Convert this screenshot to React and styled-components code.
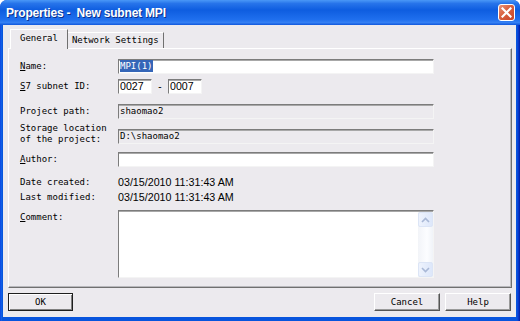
import React from 'react';
import styled, { createGlobalStyle } from 'styled-components';

const GlobalStyle = createGlobalStyle`
  html, body {
    margin: 0;
    padding: 0;
    background: #fff;
  }
  body {
    width: 520px;
    height: 321px;
    overflow: hidden;
  }
`;

const MONO = `"DejaVu Sans Mono", "Liberation Mono", monospace`;
const SANS = `"Liberation Sans", Arial, sans-serif`;
const FACE = '#ECEAEE';

const Properties = () => {
  return (
    <Window>
      <GlobalStyle />
      <TitleBar>
        <Title>Properties -  New subnet MPI</Title>
        <CloseButton aria-label="Close">
          <svg width="11" height="11" viewBox="0 0 11 11">
            <path d="M1.5 1.5 L9.5 9.5 M9.5 1.5 L1.5 9.5" stroke="#fff" strokeWidth="2.2" strokeLinecap="square" />
          </svg>
        </CloseButton>
      </TitleBar>
      <Frame>
        <Body>
          <TabStrip>
            <Tab $active>General</Tab>
            <Tab>Network Settings</Tab>
          </TabStrip>
          <Panel>
            <Row>
              <Label><u>N</u>ame:</Label>
              <Field><Selected>MPI(1)</Selected></Field>
            </Row>
            <Row $mt={5}>
              <Label><u>S</u>7 subnet ID:</Label>
              <IdGroup>
                <Field $w={34} $sans>0027</Field>
                <Dash>-</Dash>
                <Field $w={34} $sans>0007</Field>
              </IdGroup>
            </Row>
            <Row $mt={10}>
              <Label>Project path:</Label>
              <Field $readOnly>shaomao2</Field>
            </Row>
            <Row $mt={9}>
              <Label $twoLine>Storage location<br />of the project:</Label>
              <Field $readOnly>D:\shaomao2</Field>
            </Row>
            <Row $mt={7}>
              <Label><u>A</u>uthor:</Label>
              <Field />
            </Row>
            <Row $mt={8}>
              <Label>Date created:</Label>
              <Value>03/15/2010 11:31:43 AM</Value>
            </Row>
            <Row>
              <Label>Last modified:</Label>
              <Value>03/15/2010 11:31:43 AM</Value>
            </Row>
            <Row $mt={5} $top>
              <Label $top><u>C</u>omment:</Label>
              <CommentBox>
                <CommentText />
                <ScrollBar>
                  <ArrowButton>
                    <svg width="9" height="6" viewBox="0 0 9 6">
                      <path d="M1 5 L4.5 1.5 L8 5" fill="none" stroke="#A9B8D6" strokeWidth="1.6" />
                    </svg>
                  </ArrowButton>
                  <Track />
                  <ArrowButton>
                    <svg width="9" height="6" viewBox="0 0 9 6">
                      <path d="M1 1 L4.5 4.5 L8 1" fill="none" stroke="#A9B8D6" strokeWidth="1.6" />
                    </svg>
                  </ArrowButton>
                </ScrollBar>
              </CommentBox>
            </Row>
          </Panel>
          <ButtonBar>
            <Button $default>OK</Button>
            <Spacer />
            <Button>Cancel</Button>
            <Button>Help</Button>
          </ButtonBar>
        </Body>
      </Frame>
    </Window>
  );
};

const Window = styled.div`
  width: 520px;
  height: 321px;
  display: flex;
  flex-direction: column;
  border-radius: 7px 7px 0 0;
  overflow: hidden;
  background: #0A46D8;
`;

const TitleBar = styled.div`
  height: 25px;
  flex: none;
  display: flex;
  align-items: center;
  padding: 0 5px 0 6px;
  box-sizing: border-box;
  background: linear-gradient(180deg, #4A98F7 0%, #2774EA 14%, #0E5DE0 40%, #1F6FEE 78%, #3580F3 90%, #1057DC 100%);
`;

const Title = styled.div`
  flex: 1;
  color: #fff;
  font-family: ${SANS};
  font-weight: bold;
  font-size: 12px;
  letter-spacing: -0.2px;
  white-space: pre;
  padding-top: 1px;
  text-shadow: 1px 1px #0A2F8C;
`;

const CloseButton = styled.div`
  width: 17px;
  height: 17px;
  box-sizing: border-box;
  border: 1px solid #fff;
  border-radius: 3px;
  display: flex;
  align-items: center;
  justify-content: center;
  background: linear-gradient(135deg, #E8947A 0%, #D8613F 45%, #C8452A 100%);
`;

const Frame = styled.div`
  flex: 1;
  display: flex;
  padding: 0 4px 4px 3px;
  background: linear-gradient(90deg, #0831D9 0, #166AEE 1px, #0855DD 2px, #0855DD calc(100% - 3px), #0B3FD8 calc(100% - 2px), #001EA0 100%);
`;

const Body = styled.div`
  flex: 1;
  display: flex;
  flex-direction: column;
  background: ${FACE};
  padding: 0 4px 0 5px;
`;

const TabStrip = styled.div`
  position: relative;
  z-index: 1;
  height: 24px;
  flex: none;
  display: flex;
  align-items: flex-end;
  padding-left: 2px;
  margin-bottom: -1px;
`;

const Tab = styled.div`
  box-sizing: border-box;
  height: ${(p) => (p.$active ? 20 : 16)}px;
  padding: ${(p) => (p.$active ? '2px 9px 0 9px' : '1px 4px 0 4px')};
  margin-bottom: ${(p) => (p.$active ? 0 : 1)}px;
  background: ${FACE};
  border-top: 1px solid #fff;
  border-left: ${(p) => (p.$active ? '1px solid #fff' : 'none')};
  border-right: 1px solid #707070;
  font-family: ${MONO};
  font-size: 9px;
  color: #000;
  line-height: 13px;
  white-space: nowrap;
`;

const Panel = styled.div`
  height: 240px;
  flex: none;
  box-sizing: border-box;
  border: 1px solid;
  border-color: #fff #707070 #707070 #fff;
  box-shadow: inset -1px -1px #B8B8BC;
  padding: 10px 0 0 11px;
  display: flex;
  flex-direction: column;
`;

const Row = styled.div`
  display: flex;
  align-items: ${(p) => (p.$top ? 'flex-start' : 'center')};
  min-height: 15px;
  margin-top: ${(p) => p.$mt || 0}px;
`;

const Label = styled.div`
  width: 98px;
  flex: none;
  font-family: ${MONO};
  font-size: 9px;
  line-height: ${(p) => (p.$twoLine ? '11px' : '15px')};
  margin-top: ${(p) => (p.$twoLine ? '-5px' : '0')};
  color: #000;
  white-space: nowrap;
  u { text-decoration: underline; text-underline-offset: 1px; }
`;

const Field = styled.div`
  width: ${(p) => p.$w || 316}px;
  height: 15px;
  box-sizing: border-box;
  border: 1px solid;
  border-color: #7C7C7C #F4F4F4 #F4F4F4 #7C7C7C;
  box-shadow: inset 0 1px #A8A8A8;
  background: ${(p) => (p.$readOnly ? FACE : '#fff')};
  padding: 0 0 0 1px;
  font-family: ${(p) => (p.$sans ? SANS : MONO)};
  font-size: ${(p) => (p.$sans ? '10.6px' : '9px')};
  line-height: 13px;
  color: #000;
  white-space: nowrap;
  overflow: hidden;
`;

const Selected = styled.span`
  background: #3566B8;
  color: #fff;
  padding: 1px 0;
`;

const IdGroup = styled.div`
  display: flex;
  align-items: center;
`;

const Dash = styled.span`
  width: 16px;
  text-align: center;
  font-family: ${SANS};
  font-size: 10px;
`;

const Value = styled.div`
  font-family: ${SANS};
  font-size: 10.7px;
  line-height: 15px;
  color: #000;
  white-space: nowrap;
`;

const CommentBox = styled.div`
  width: 316px;
  height: 68px;
  box-sizing: border-box;
  display: flex;
  border: 1px solid;
  border-color: #7C7C7C #F4F4F4 #F4F4F4 #7C7C7C;
  box-shadow: inset 0 1px #A8A8A8;
  background: #fff;
`;

const CommentText = styled.div`
  flex: 1;
`;

const ScrollBar = styled.div`
  width: 15px;
  display: flex;
  flex-direction: column;
  background: linear-gradient(90deg, #F2F4F8, #FCFDFF 60%, #F0F3F8);
  margin-top: 1px;
`;

const ArrowButton = styled.div`
  height: 15px;
  box-sizing: border-box;
  border: 1px solid #DCE5F6;
  border-radius: 2px;
  background: linear-gradient(90deg, #EEF3FD, #DDE7FA);
  display: flex;
  align-items: center;
  justify-content: center;
`;

const Track = styled.div`
  flex: 1;
`;

const ButtonBar = styled.div`
  flex: 1;
  display: flex;
  align-items: center;
  gap: 5px;
  padding-right: 1px;
  padding-bottom: 1px;
`;

const Spacer = styled.div`
  flex: 1;
`;

const Button = styled.div`
  width: ${(p) => (p.$default ? 65 : 66)}px;
  height: 18px;
  box-sizing: border-box;
  display: flex;
  align-items: center;
  justify-content: center;
  font-family: ${MONO};
  font-size: 9px;
  color: #000;
  background: ${FACE};
  border: 1px solid;
  border-color: ${(p) => (p.$default ? '#1E1E1E' : '#FFFFFF #555 #555 #FFFFFF')};
  box-shadow: ${(p) =>
    p.$default
      ? 'inset 1px 1px #fff, inset -1px -1px #808080'
      : 'inset -1px -1px #9A9A9A'};
`;

export default function App() {
  return <Properties />;
}
